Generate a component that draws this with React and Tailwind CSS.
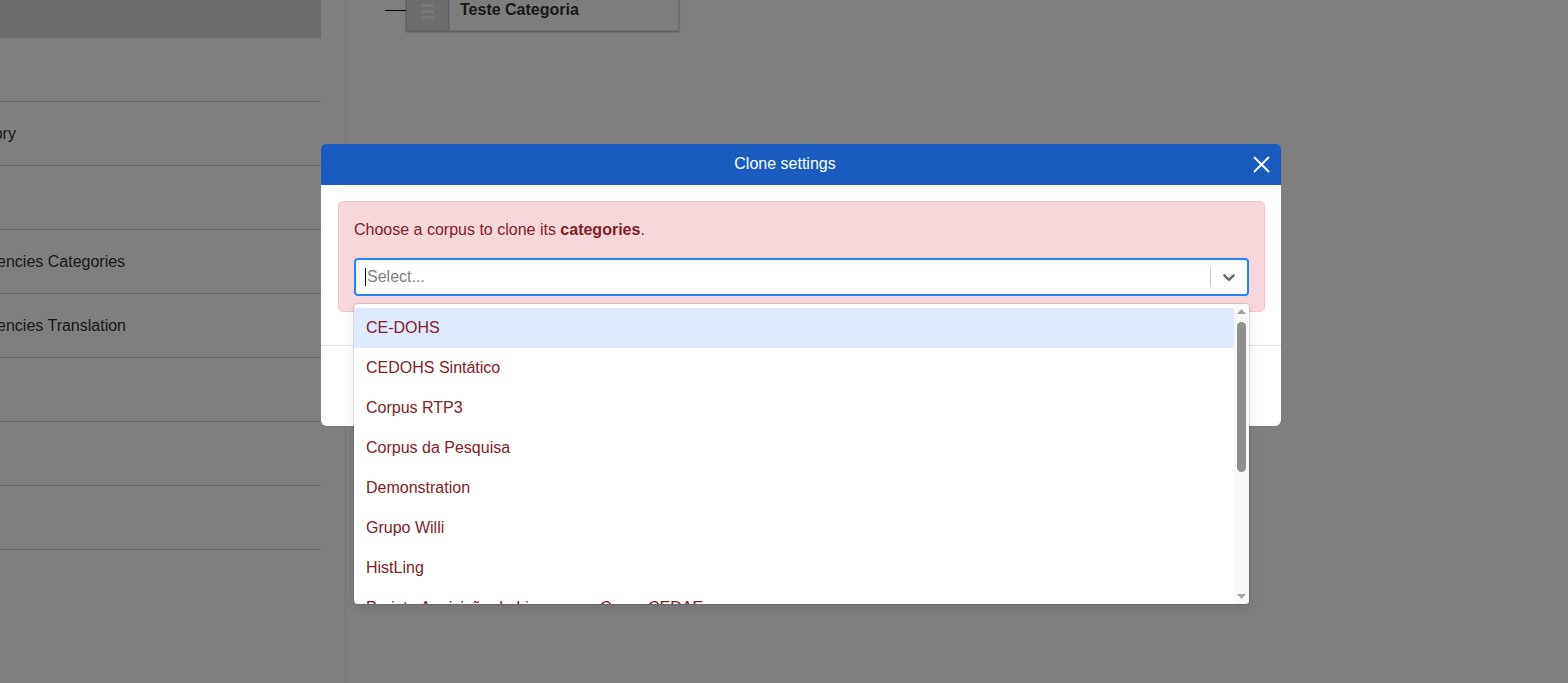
import React from "react";

const options = [
  "CE-DOHS",
  "CEDOHS Sintático",
  "Corpus RTP3",
  "Corpus da Pesquisa",
  "Demonstration",
  "Grupo Willi",
  "HistLing",
  "Projeto Aquisição da Linguagem Corpo CEDAE",
];

const rows = [
  { text: "", ml: "ml-0" },
  { text: "Category", ml: "ml-[-49px]" },
  { text: "", ml: "ml-0" },
  { text: "Dependencies Categories", ml: "ml-[-59px]" },
  { text: "Dependencies Translation", ml: "ml-[-59px]" },
  { text: "", ml: "ml-0" },
  { text: "", ml: "ml-0" },
  { text: "", ml: "ml-0" },
];

export default function App() {
  return (
    <div
      className="relative w-[1568px] h-[683px] overflow-hidden bg-white"
      style={{ fontFamily: '"Liberation Sans", Arial, sans-serif' }}
    >
      {/* underlying page */}
      <div className="flex h-full">
        <div className="w-[346px] shrink-0 border-r border-[#e8e8e8] h-full">
          <div className="w-[321px]">
            <div className="h-[38px] bg-[#dcdcdc] border-b border-[#d2d2d2]" />
            {rows.map((r, i) => (
              <div
                key={i}
                className="h-[64px] border-b border-[#d4d4d4] flex items-center overflow-hidden"
              >
                <span className={`${r.ml} whitespace-nowrap text-[16px] text-[#333]`}>
                  {r.text}
                </span>
              </div>
            ))}
          </div>
        </div>
        <div className="flex-1">
          <div className="flex items-start pl-[39px]">
            <div className="w-[21px] h-px bg-black mt-[10px]" />
            <div className="flex mt-[-10px] shadow-[0_1px_2px_rgba(0,0,0,0.35)]">
              <div className="w-[43px] h-[41px] bg-[#dcdcdc] border border-[#c4c4c4] flex flex-col items-center justify-center gap-[3px] pt-[2px]">
                <div className="w-[13px] h-[3px] bg-[#f2f2f2]" />
                <div className="w-[13px] h-[3px] bg-[#f2f2f2]" />
                <div className="w-[13px] h-[3px] bg-[#f2f2f2]" />
              </div>
              <div className="w-[230px] h-[41px] bg-[#fbfbfb] border border-[#dcdcdc] pl-[10px] pt-[7px] text-[16px] font-bold text-[#333]">
                Teste Categoria
              </div>
            </div>
          </div>
        </div>
      </div>

      {/* overlay */}
      <div className="absolute inset-0 bg-black/50" />

      {/* modal */}
      <div className="absolute left-[321px] top-[144px] w-[960px] bg-white rounded-[6px]">
        <div className="h-[41px] bg-[#1a5bbf] rounded-t-[5px] flex items-center pb-[2px]">
          <div className="flex-1 text-center text-white text-[16px]">Clone settings</div>
          <div className="w-[32px] flex items-center justify-start pl-[4px] pt-[2px]">
            <svg width="17" height="17" viewBox="0 0 17 17">
              <path d="M1 1L16 16M16 1L1 16" stroke="white" strokeWidth="2" />
            </svg>
          </div>
        </div>
        <div className="pl-[17px] pr-[16px] pt-[16px] pb-[33px]">
          <div className="bg-[#f8d7da] border border-[#f5c2c7] rounded-[5px] text-[#842029] px-[15px] pt-[16px] pb-[15px]">
            <div className="text-[16px] leading-[24px]">
              Choose a corpus to clone its <b>categories</b>.
            </div>
            <div className="relative mt-[16px]">
              <div className="h-[38px] border-2 border-[#2684ff] rounded-[4px] bg-white flex items-center">
                <div className="flex-1 flex items-center pl-[9px]">
                  <span className="w-px h-[18px] bg-black" />
                  <span className="text-[16px] text-[#808080] ml-px">Select...</span>
                </div>
                <span className="w-px h-[20px] bg-[#cccccc]" />
                <div className="w-[36px] flex items-center justify-center">
                  <svg width="20" height="20" viewBox="0 0 20 20" fill="#666666">
                    <path d="M4.516 7.548c0.436-0.446 1.043-0.481 1.576 0l3.908 3.747 3.908-3.747c0.533-0.481 1.141-0.446 1.574 0 0.436 0.445 0.408 1.197 0 1.615-0.406 0.418-4.695 4.502-4.695 4.502-0.217 0.223-0.502 0.335-0.787 0.335s-0.57-0.112-0.789-0.335c0 0-4.287-4.084-4.695-4.502s-0.436-1.170 0-1.615z" />
                  </svg>
                </div>
              </div>
              <div className="absolute left-0 right-0 top-[46px] h-[300px] bg-white rounded-[4px] overflow-hidden shadow-[0_0_0_1px_rgba(0,0,0,0.1),0_4px_11px_rgba(0,0,0,0.1)] z-10 flex">
                <div className="flex-1 overflow-hidden py-[4px]">
                  {options.map((o, i) => (
                    <div
                      key={o}
                      className={`h-[40px] px-[12px] flex items-center text-[16px] text-[#842029] whitespace-nowrap ${
                        i === 0 ? "bg-[#deebff]" : ""
                      }`}
                    >
                      {o}
                    </div>
                  ))}
                </div>
                <div className="w-[15px] bg-[#f9f9f9] flex flex-col">
                  <div className="h-[15px] flex items-center justify-center">
                    <svg width="9" height="5" viewBox="0 0 9 5">
                      <polygon points="0,5 4.5,0 9,5" fill="#a3a3a3" />
                    </svg>
                  </div>
                  <div className="flex-1 px-[3px] pt-[3px]">
                    <div className="h-[150px] w-[9px] rounded-full bg-[#8f8f8f]" />
                  </div>
                  <div className="h-[15px] flex items-center justify-center">
                    <svg width="9" height="5" viewBox="0 0 9 5">
                      <polygon points="0,0 4.5,5 9,0" fill="#a3a3a3" />
                    </svg>
                  </div>
                </div>
              </div>
            </div>
          </div>
        </div>
        <div className="h-[81px] border-t border-[#dee2e6]" />
      </div>
    </div>
  );
}
